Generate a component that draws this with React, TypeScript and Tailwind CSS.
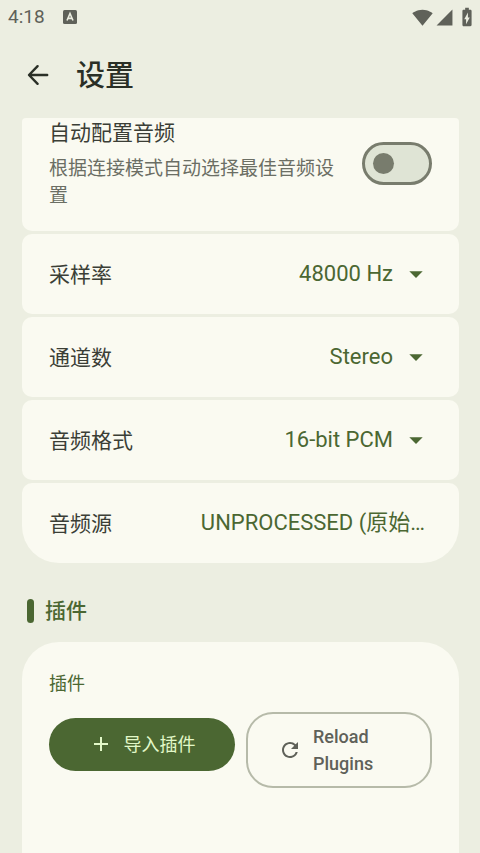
import { useState } from "react";
import {
  MdAdd,
  MdArrowDropDown,
  MdBatteryChargingFull,
  MdRefresh,
  MdSignalCellular4Bar,
  MdSignalWifi4Bar,
} from "react-icons/md";

const audioSettings = [
  { id: "sample-rate", label: "采样率", options: ["48000 Hz", "44100 Hz", "16000 Hz"], arrow: true },
  { id: "channels", label: "通道数", options: ["Stereo", "Mono"], arrow: true },
  { id: "format", label: "音频格式", options: ["16-bit PCM", "8-bit PCM"], arrow: true },
  { id: "source", label: "音频源", options: ["UNPROCESSED (原始…"], arrow: false },
];

function StatusBar() {
  return (
    <div className="flex h-8 shrink-0 items-center justify-between pt-[2px] pr-[2px] pl-2 text-[#5f6159]">
      <div className="flex items-center gap-[18px]">
        <span className="text-[19px] leading-6">4:18</span>
        <svg width="14" height="14" viewBox="0 0 14 14" aria-hidden="true">
          <rect width="14" height="14" rx="1.5" fill="currentColor" />
          <path
            d="M4 10.5L7 3.5L10 10.5M5.1 8.4H8.9"
            fill="none"
            stroke="#eceee1"
            strokeWidth="1.6"
          />
        </svg>
      </div>
      <div className="flex items-center gap-[2px]">
        <MdSignalWifi4Bar size={21} />
        <MdSignalCellular4Bar size={19} />
        <MdBatteryChargingFull size={22} />
      </div>
    </div>
  );
}

function Header() {
  return (
    <header className="flex h-[86px] shrink-0 items-center gap-[22px] pl-[22px] text-[#2a2f26]">
      <button type="button" aria-label="返回" className="flex size-8 items-center justify-center">
        <svg
          width="32"
          height="32"
          viewBox="0 0 32 32"
          fill="none"
          stroke="currentColor"
          strokeWidth="2.4"
          strokeLinecap="round"
          strokeLinejoin="round"
        >
          <path d="M25.2 16H7.5M15.6 7.2L7 16L15.6 24.8" />
        </svg>
      </button>
      <h1 className="pt-[2px] text-[29px] leading-10 font-medium">设置</h1>
    </header>
  );
}

function AutoConfigCard() {
  const [enabled, setEnabled] = useState(false);

  return (
    <div className="flex items-center gap-4 rounded-[10px] bg-[#fafaf1] px-[27px] py-[22px]">
      <label htmlFor="auto-config" className="flex-1">
        <span className="block text-[21px] leading-8 text-[#3b3e36]">自动配置音频</span>
        <span className="mt-[6px] block text-[19px] leading-[27px] text-[#6b6e64]">
          根据连接模式自动选择最佳音频设置
        </span>
      </label>
      <input
        id="auto-config"
        type="checkbox"
        role="switch"
        checked={enabled}
        onChange={(e) => setEnabled(e.target.checked)}
        className="flex h-[43px] w-[70px] shrink-0 appearance-none items-center rounded-full border-3 border-[#787c6d] bg-[#dfe4d5] px-2 before:block before:size-[21px] before:rounded-full before:bg-[#787c6d] checked:justify-end checked:bg-[#4b6732] checked:before:bg-white"
      />
    </div>
  );
}

function SelectCard({ id, label, options, arrow }: (typeof audioSettings)[number]) {
  return (
    <div className="flex h-20 items-center justify-between rounded-[10px] bg-[#fafaf1] px-[27px] last:rounded-b-[37px]">
      <label htmlFor={id} className="pt-[2px] text-[21px] leading-8 text-[#3b3e36]">
        {label}
      </label>
      <div className="relative flex items-center text-[#4b6732]">
        <select
          id={id}
          className={`field-sizing-content appearance-none bg-transparent text-[22px] leading-8 ${
            arrow ? "pr-[39px]" : "pr-[7px]"
          }`}
        >
          {options.map((option) => (
            <option key={option}>{option}</option>
          ))}
        </select>
        {arrow && <MdArrowDropDown size={32} className="pointer-events-none absolute right-0" />}
      </div>
    </div>
  );
}

function PluginCard() {
  return (
    <div className="flex-1 rounded-t-[37px] bg-[#fafaf1] px-[27px] pt-7">
      <h3 className="text-[18px] leading-[27px] text-[#4b6732]">插件</h3>
      <div className="mt-[15px] grid grid-cols-2 items-start gap-[11px]">
        <div className="flex h-16 items-center">
          <button
            type="button"
            className="flex h-[53px] flex-1 items-center justify-center gap-[11px] rounded-full bg-[#4b6732] text-[18px] leading-[27px] text-[#e2f8c8]"
          >
            <MdAdd size={24} />
            导入插件
          </button>
        </div>
        <button
          type="button"
          className="flex items-center gap-[11px] rounded-[27px] border-2 border-[#b6baa9] px-[30px] py-[9px] text-left text-[18px] leading-[27px] font-medium text-[#5f6159]"
        >
          <MdRefresh size={24} className="shrink-0" />
          <span>Reload Plugins</span>
        </button>
      </div>
    </div>
  );
}

export default function App() {
  return (
    <div className="flex h-screen flex-col overflow-hidden bg-[#eceee1] font-[Roboto,'Noto_Sans_CJK_SC',sans-serif]">
      <StatusBar />
      <Header />
      <main className="mr-[21px] ml-[22px] flex flex-1 flex-col overflow-hidden rounded-t-[4px]">
        {/* list is scrolled a little, so the first card slides under the header */}
        <section className="-mt-[23px] flex flex-col gap-[3px]">
          <AutoConfigCard />
          {audioSettings.map((setting) => (
            <SelectCard key={setting.id} {...setting} />
          ))}
        </section>
        <section className="flex flex-1 flex-col">
          <div className="flex h-[79px] items-center gap-[11px] pt-4 pl-[5px] text-[#4b6732]">
            <span className="h-6 w-[7px] rounded-full bg-[#4b6732]" />
            <h2 className="text-[21px] leading-8 font-medium">插件</h2>
          </div>
          <PluginCard />
        </section>
      </main>
    </div>
  );
}
